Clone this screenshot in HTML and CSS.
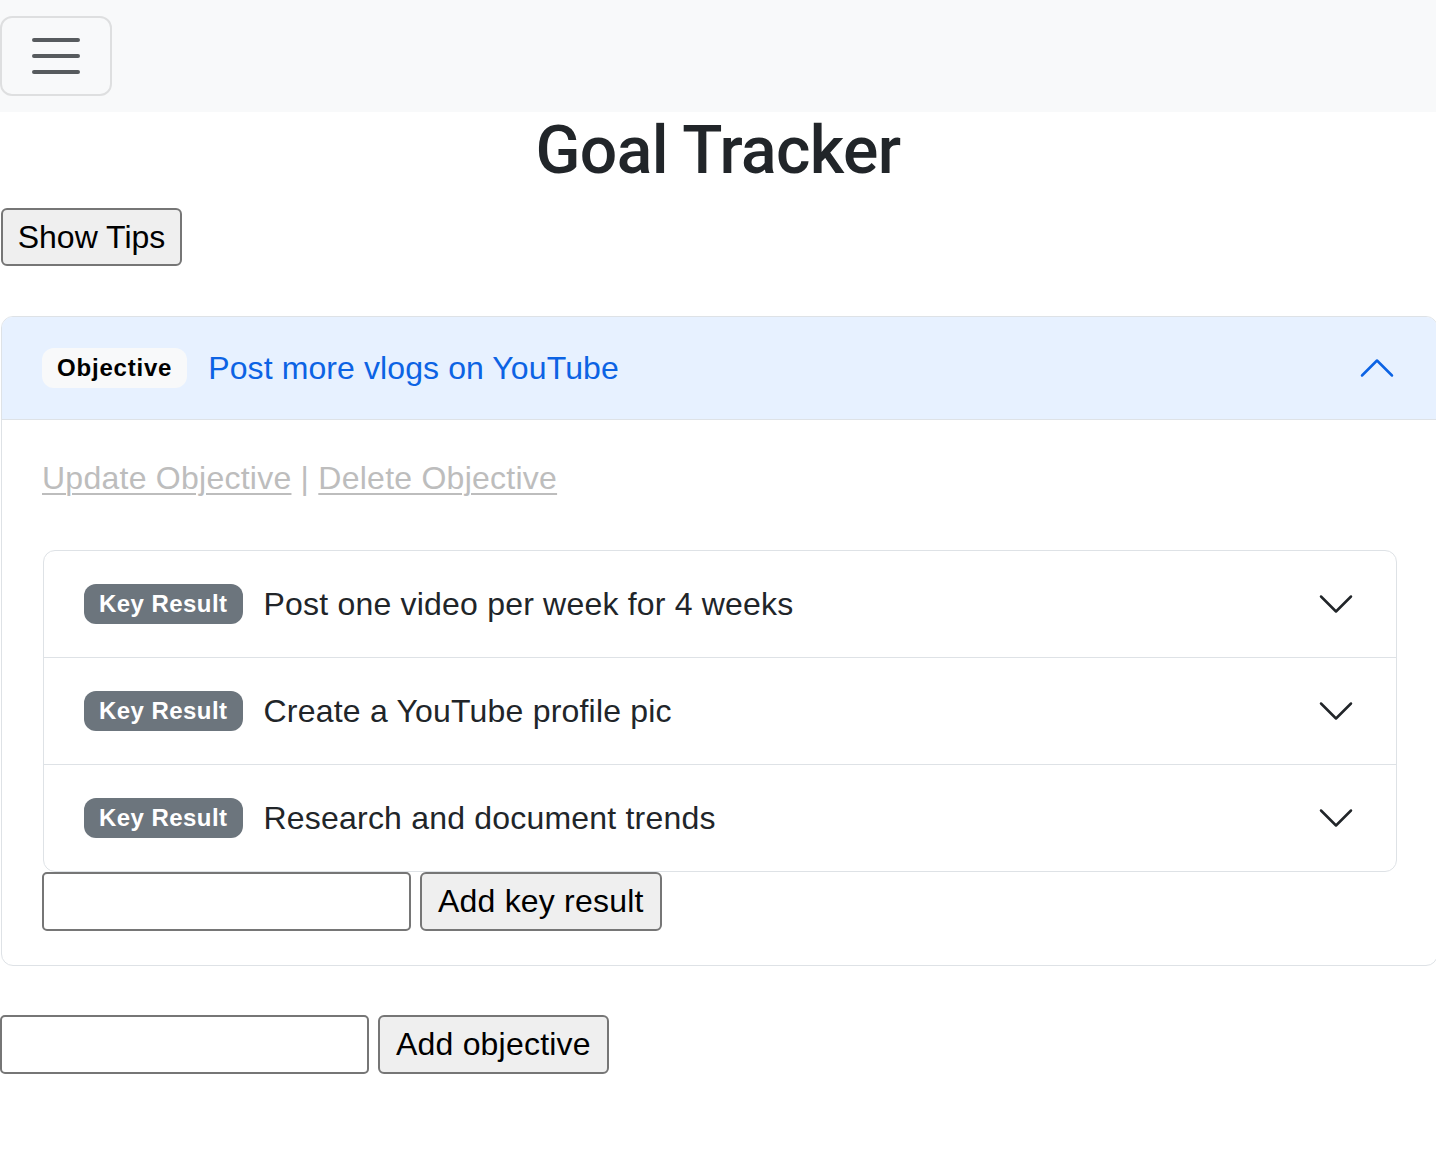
FILE: index.html
```html
<!DOCTYPE html>
<html lang="en">
<head>
<meta charset="utf-8">
<title>Goal Tracker</title>
<link rel="stylesheet" href="styles.css">
</head>
<body>
<nav class="navbar">
  <button class="toggler" aria-label="Toggle navigation">
    <svg class="toggler-icon" viewBox="0 0 30 30" width="60" height="60"><path d="M4 7h22M4 15h22M4 23h22" fill="none" stroke="rgba(33,37,41,0.75)" stroke-width="2" stroke-linecap="round"/></svg>
  </button>
</nav>
<h1 class="title">Goal Tracker</h1>
<button class="native-btn tips-btn">Show Tips</button>

<div class="accordion outer">
  <div class="acc-header">
    <span class="badge badge-light">Objective</span>
    <span class="obj-title">Post more vlogs on YouTube</span>
    <svg class="chevron" viewBox="0 0 16 16" width="40" height="40"><path d="M2 11L8 5L14 11" fill="none" stroke="#0c63e4" stroke-linecap="round" stroke-linejoin="round"/></svg>
  </div>
  <div class="acc-body">
    <div class="links"><a href="#" class="muted-link">Update Objective</a> | <a href="#" class="muted-link">Delete Objective</a></div>
    <div class="accordion inner">
      <div class="kr-row">
        <span class="badge badge-gray">Key Result</span>
        <span class="kr-text">Post one video per week for 4 weeks</span>
        <svg class="chevron" viewBox="0 0 16 16" width="40" height="40"><path d="M2 5L8 11L14 5" fill="none" stroke="#212529" stroke-linecap="round" stroke-linejoin="round"/></svg>
      </div>
      <div class="kr-row">
        <span class="badge badge-gray">Key Result</span>
        <span class="kr-text">Create a YouTube profile pic</span>
        <svg class="chevron" viewBox="0 0 16 16" width="40" height="40"><path d="M2 5L8 11L14 5" fill="none" stroke="#212529" stroke-linecap="round" stroke-linejoin="round"/></svg>
      </div>
      <div class="kr-row">
        <span class="badge badge-gray">Key Result</span>
        <span class="kr-text">Research and document trends</span>
        <svg class="chevron" viewBox="0 0 16 16" width="40" height="40"><path d="M2 5L8 11L14 5" fill="none" stroke="#212529" stroke-linecap="round" stroke-linejoin="round"/></svg>
      </div>
    </div>
    <div class="add-row">
      <input type="text" class="native-input">
      <button class="native-btn add-btn">Add key result</button>
    </div>
  </div>
</div>

<div class="add-row objective-row">
  <input type="text" class="native-input">
  <button class="native-btn add-btn">Add objective</button>
</div>
</body>
</html>
```

FILE: styles.css
```css
html, body {
  margin: 0;
  padding: 0;
  overflow-x: hidden;
}
body {
  font-family: "Liberation Sans", Arial, sans-serif;
  font-size: 32px;
  line-height: 1.5;
  color: #212529;
  background: #fff;
}
.navbar {
  height: 112px;
  background: #f8f9fa;
  padding-top: 16px;
  box-sizing: border-box;
}
.toggler {
  display: block;
  margin: 0;
  padding: 8px 24px;
  width: 112px;
  height: 80px;
  box-sizing: border-box;
  background: transparent;
  border: 2px solid rgba(0, 0, 0, 0.1);
  border-radius: 12px;
}
.toggler-icon {
  display: block;
}
.title {
  margin: 0 0 18px;
  text-align: center;
  font-family: Roboto, "Liberation Sans", Arial, sans-serif;
  font-size: 66px;
  line-height: 78px;
  font-weight: 500;
  letter-spacing: -0.6px;
  color: #212529;
}
.native-btn {
  font-family: "Liberation Sans", Arial, sans-serif;
  font-size: 32px;
  color: #000;
  background: #efefef;
  border: 2px solid #767676;
  border-radius: 6px;
  height: 59px;
  box-sizing: border-box;
  margin: 0;
}
.tips-btn {
  display: block;
  height: 58px;
  width: 181px;
  padding: 0 12px;
  margin-left: 1px;
  margin-bottom: 50px;
}
.accordion {
  border: 1px solid #dee2e6;
  border-radius: 12px;
  box-sizing: border-box;
  overflow: hidden;
}
.outer {
  margin-left: 1px;
  width: 1437px;
}
.acc-header {
  display: flex;
  align-items: center;
  height: 103px;
  box-sizing: border-box;
  padding: 0 40px;
  background: #e7f1ff;
  border-bottom: 1px solid #dee2e6;
}
.badge {
  display: inline-block;
  font-size: 24px;
  font-weight: 700;
  line-height: 1;
  padding: 8px 15px;
  border-radius: 12px;
  white-space: nowrap;
  letter-spacing: 0.45px;
}
.badge-light {
  background: #f8f9fa;
  color: #000;
  margin-right: 21px;
  letter-spacing: 0.8px;
}
.badge-gray {
  background: #6c757d;
  color: #fff;
  margin-right: 21px;
}
.obj-title {
  color: #0c63e4;
  font-size: 32px;
  letter-spacing: 0.1px;
}
.chevron {
  margin-left: auto;
  flex-shrink: 0;
  display: block;
}
.acc-body {
  padding: 32px 40px 34px;
}
.links {
  color: #bdbdbd;
  line-height: 48px;
  padding-top: 2px;
  margin-bottom: 48px;
  letter-spacing: 0.25px;
}
.muted-link {
  color: #bdbdbd;
  text-decoration: underline;
  text-underline-offset: 4px;
  text-decoration-thickness: 2px;
}
.inner {
  margin-left: 1px;
}
.kr-row {
  display: flex;
  align-items: center;
  height: 106px;
  padding: 0 40px;
  border-top: 1px solid #dee2e6;
}
.kr-row:first-child {
  border-top: none;
  height: 106px;
}
.kr-text {
  font-size: 32px;
  color: #212529;
  letter-spacing: 0.2px;
}
.add-row {
  display: flex;
  gap: 9px;
  align-items: stretch;
}
.native-input {
  width: 369px;
  height: 59px;
  box-sizing: border-box;
  border: 2px solid #767676;
  border-radius: 5px;
  margin: 0;
  padding: 2px 4px;
  font-size: 32px;
  font-family: "Liberation Sans", Arial, sans-serif;
  background: #fff;
}
.add-btn {
  padding: 0 16px;
  letter-spacing: 0.2px;
}
.objective-row {
  margin-top: 49px;
}
```
